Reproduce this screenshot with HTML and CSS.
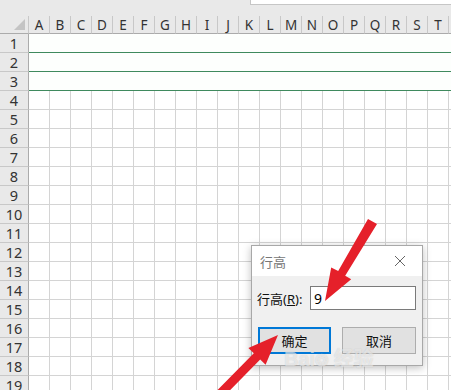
FILE: index.html
```html
<!DOCTYPE html>
<html lang="zh-CN">
<head>
    <meta charset="UTF-8">
    <meta name="viewport" content="width=device-width, initial-scale=1.0">
    <title>行高</title>
    <link rel="stylesheet" href="styles.css">
</head>
<body>
    <div class="sheet">
        <div class="topbar">
            <div class="formula"></div>
        </div>
        <div class="grid" id="grid"></div>

        <div class="dialog">
            <div class="dialog-title">
                <span>行高</span>
                <svg class="close" width="12" height="12" viewBox="0 0 12 12">
                    <path d="M1 1 L11 11 M11 1 L1 11" stroke="#666" stroke-width="1" fill="none"/>
                </svg>
            </div>
            <div class="dialog-body">
                <div class="field">
                    <label for="rowHeight">行高(<u>R</u>):</label>
                    <input type="text" id="rowHeight" value="9">
                </div>
                <div class="buttons">
                    <button type="button" class="btn btn-ok">确定</button>
                    <button type="button" class="btn">取消</button>
                </div>
                <div class="watermark">Bai<span class="paw">&#x2742;</span> 经验</div>
            </div>
        </div>

        <svg class="arrows" width="451" height="390" viewBox="0 0 451 390">
            <polygon points="368,219 377,224 345.2,275.7 351.2,279.3 325,301 331.2,267.5 338.2,271.1" fill="#e5202a"/>
            <polygon points="214.8,392.8 253.8,353.2 248.4,348 278,335 265.6,364.8 260.2,359.5 221.2,399.2" fill="#e5202a"/>
        </svg>
    </div>

    <script>
        const grid = document.getElementById('grid');
        const letters = 'ABCDEFGHIJKLMNOPQRST';

        let html = '<div class="corner"><span class="tri"></span></div>';
        for (let c = 0; c < 21; c++) {
            html += `<div class="col-head">${letters[c] || ''}</div>`;
        }
        for (let r = 1; r <= 19; r++) {
            const sel = r <= 3 ? ' selected' : '';
            html += `<div class="row-head">${r}</div>`;
            for (let c = 0; c < 21; c++) {
                html += `<div class="cell${sel}"></div>`;
            }
        }
        grid.innerHTML = html;
    </script>
</body>
</html>
```

FILE: styles.css
```css
body {
    margin: 0;
    font-family: "Noto Sans", "Noto Sans CJK SC", sans-serif;
    background-color: #fff;
}
.sheet {
    position: relative;
    width: 451px;
    height: 390px;
    overflow: hidden;
}
.topbar {
    height: 16px;
    background-color: #e9e9e9;
    display: flex;
    justify-content: flex-end;
}
.formula {
    width: 200px;
    height: 4px;
    background-color: #fff;
    border-left: 1px solid #c6c6c6;
    border-bottom: 1px solid #c6c6c6;
}
.grid {
    display: grid;
    grid-template-columns: 29px repeat(21, 21px);
    grid-template-rows: 18px;
    grid-auto-rows: 19px;
}
.grid > div {
    box-sizing: border-box;
}
.corner {
    background-color: #e9e9e9;
    border-right: 1px solid #c8c8c8;
    border-bottom: 1px solid #ababab;
    position: relative;
}
.tri {
    position: absolute;
    right: 3px;
    bottom: 3px;
    width: 0;
    height: 0;
    border-left: 11px solid transparent;
    border-bottom: 11px solid #c4c4c4;
}
.col-head {
    background-color: #e9e9e9;
    border-right: 1px solid #c8c8c8;
    border-bottom: 1px solid #ababab;
    font-size: 13.5px;
    color: #333;
    text-align: center;
    line-height: 18px;
}
.row-head {
    background-color: #e9e9e9;
    border-right: 1px solid #ababab;
    border-bottom: 1px solid #c8c8c8;
    font-size: 14.5px;
    color: #333;
    text-align: center;
    line-height: 19px;
}
.cell {
    border-right: 1px solid #d4d4d4;
    border-bottom: 1px solid #d4d4d4;
}
.cell.selected {
    border-right: none;
    border-bottom: 1px solid #3f8a5e;
    background-color: #fdfffd;
}

.dialog {
    position: absolute;
    left: 251px;
    top: 245px;
    width: 172px;
    border: 1px solid #a8a8a8;
    box-shadow: 0 2px 8px rgba(0, 0, 0, 0.25);
    background-color: #f0f0f0;
    box-sizing: border-box;
}
.dialog-title {
    height: 30px;
    background-color: #fff;
    display: flex;
    align-items: center;
    justify-content: space-between;
    padding: 0 16px 0 8px;
    font-size: 13px;
    color: #777;
}
.dialog-body {
    position: relative;
    padding: 10px 6px 10px 5px;
    height: 89px;
    box-sizing: border-box;
}
.field {
    display: flex;
    align-items: center;
    font-size: 13px;
    color: #111;
}
.field label {
    width: 53px;
}
.field input {
    width: 106px;
    height: 24px;
    box-sizing: border-box;
    border: 1px solid #7a7a7a;
    padding: 0 3px;
    font-size: 14px;
    font-family: "Noto Sans", sans-serif;
    color: #000;
    background-color: #fff;
}
.buttons {
    display: flex;
    gap: 11px;
    margin-top: 17px;
    padding-left: 1px;
}
.btn {
    width: 74px;
    height: 27px;
    box-sizing: border-box;
    background-color: #e1e1e1;
    border: 1px solid #adadad;
    font-size: 13px;
    font-family: "Noto Sans CJK SC", sans-serif;
    color: #111;
    padding: 0;
}
.btn-ok {
    width: 73px;
    border: 2px solid #0078d7;
}
.watermark {
    position: absolute;
    left: 32px;
    top: 67px;
    font-size: 20px;
    font-weight: bold;
    color: rgba(255, 255, 255, 0.55);
    text-shadow: 0 0 1px rgba(120, 120, 120, 0.35);
    font-family: "Liberation Sans", "Noto Sans CJK SC", sans-serif;
    pointer-events: none;
}
.paw {
    font-size: 16px;
}
.arrows {
    position: absolute;
    left: 0;
    top: 0;
}
```
